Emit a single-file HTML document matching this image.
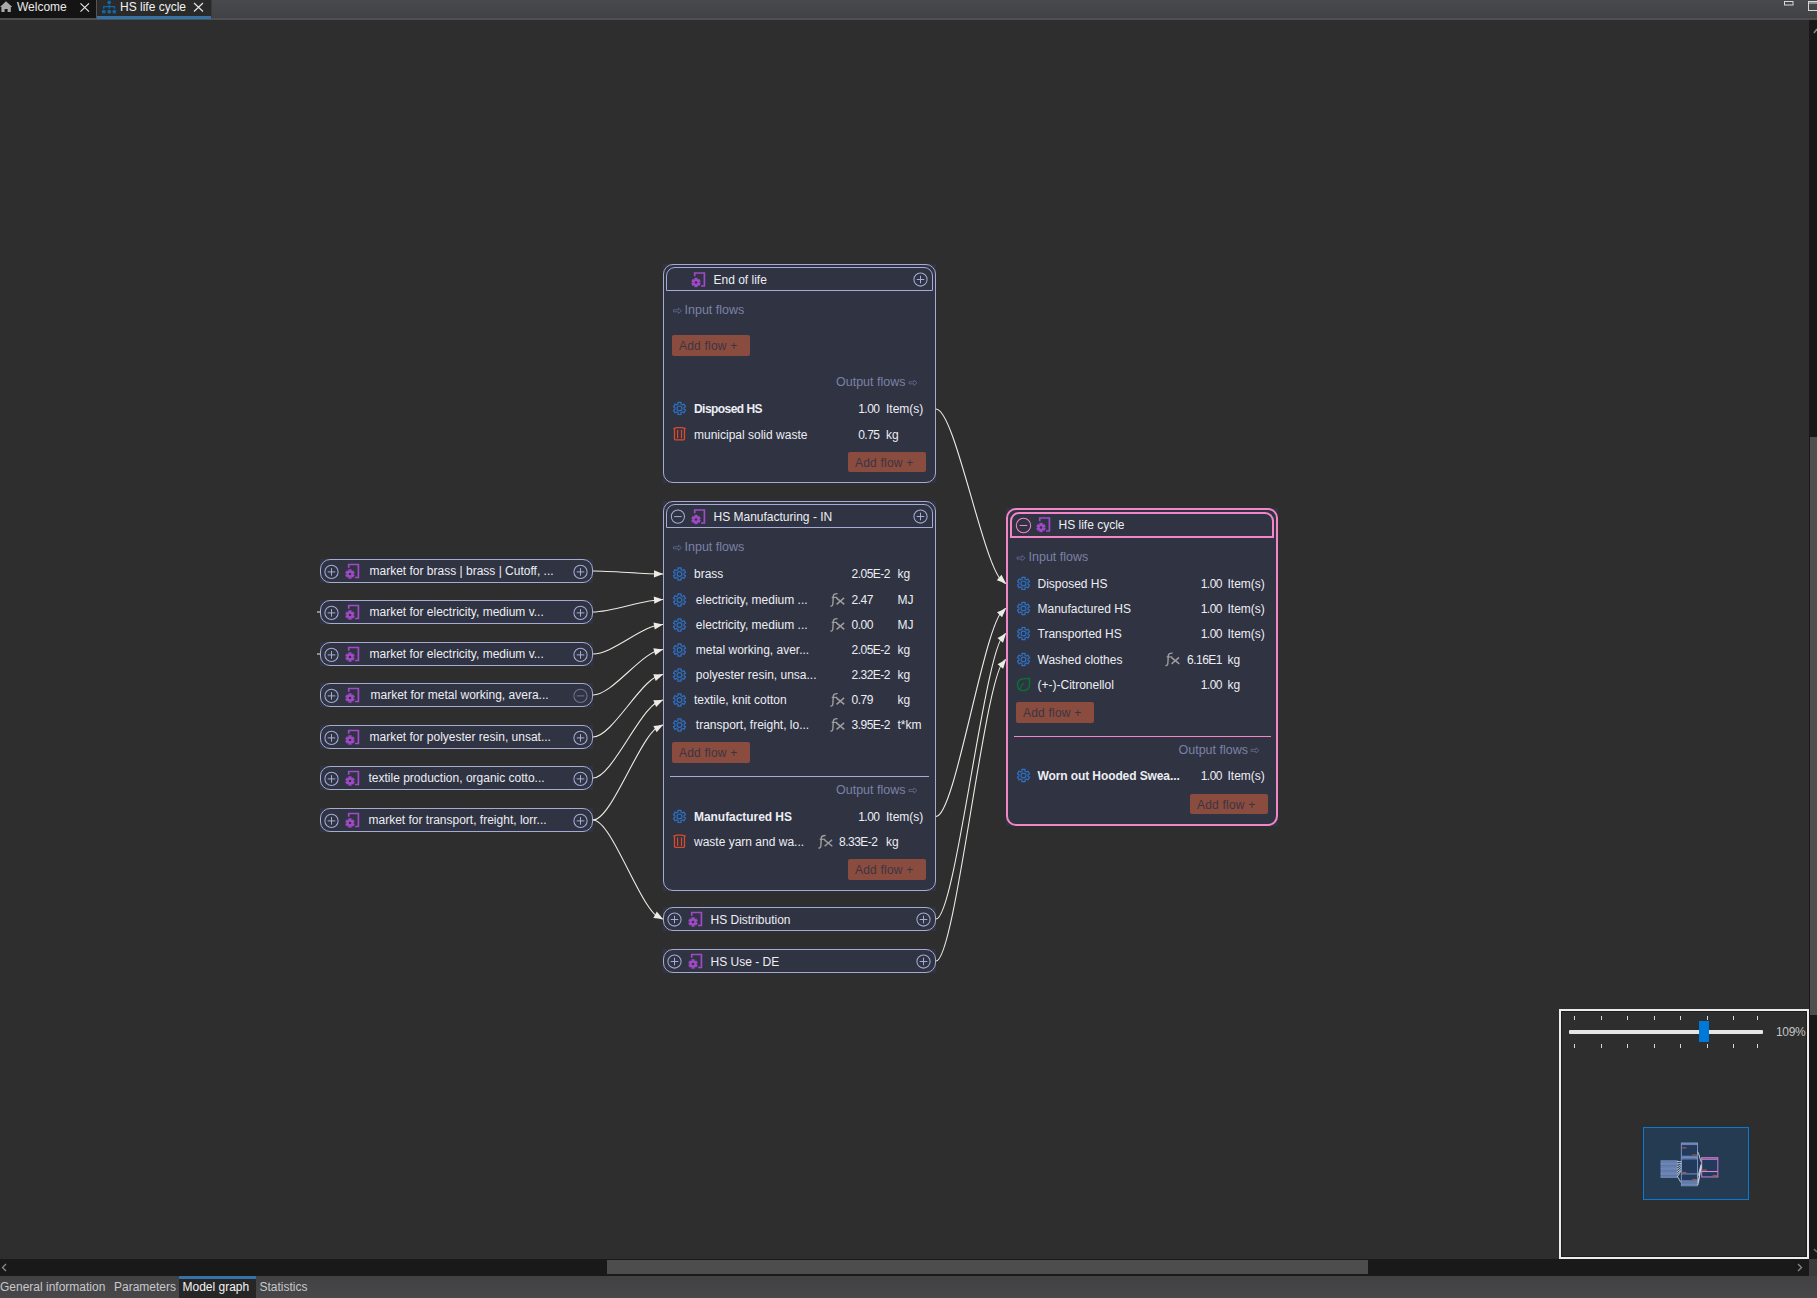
<!DOCTYPE html>
<html><head><meta charset="utf-8"><style>
html,body{margin:0;padding:0;}
body{width:1817px;height:1298px;position:relative;overflow:hidden;background:#2e2e2e;font-family:"Liberation Sans",sans-serif;}
.t{position:absolute;white-space:nowrap;line-height:14px;font-size:12px;}
.nbg{position:absolute;background:#303342;}
.nb{position:absolute;box-sizing:border-box;}
.btn{position:absolute;background:#8b4c40;border-radius:2px;}
.sep{position:absolute;height:1px;}
svg{position:absolute;left:0;top:0;}
</style></head><body>
<div style="position:absolute;left:0;top:0;width:1817px;height:18px;background:linear-gradient(#48494c,#414245)"></div><div style="position:absolute;left:0;top:18px;width:1817px;height:2px;background:#4e4f53"></div><div style="position:absolute;left:0;top:0;width:96px;height:18px;background:#141414"></div><div style="position:absolute;left:96px;top:0;width:1px;height:18px;background:#555"></div><div style="position:absolute;left:97px;top:0;width:114px;height:16px;background:#2a2a2a"></div><div style="position:absolute;left:97px;top:16px;width:114px;height:3px;background:#3472a8"></div><div style="position:absolute;left:211px;top:0;width:1px;height:18px;background:#3a3a3d"></div><div class="t" style="left:17px;top:0px;font-size:12px;color:#e8e8e8;line-height:14px">Welcome</div><div class="t" style="left:120px;top:0px;font-size:12px;color:#f2f2f2;line-height:14px">HS life cycle</div><div style="position:absolute;left:1809px;top:20px;width:8px;height:1239px;background:#191919"></div><div style="position:absolute;left:1810px;top:437px;width:7px;height:578px;background:#4f4f4f"></div><div style="position:absolute;left:0;top:1259px;width:1809px;height:17px;background:#191919"></div><div style="position:absolute;left:607px;top:1260px;width:761px;height:14px;background:#4d4d4d"></div><div style="position:absolute;left:1809px;top:1259px;width:8px;height:17px;background:#3b3b3b"></div><div style="position:absolute;left:0;top:1276px;width:1817px;height:22px;background:linear-gradient(#414144,#48484b)"></div><div style="position:absolute;left:179px;top:1276px;width:77px;height:22px;background:#262626"></div><div style="position:absolute;left:179px;top:1276px;width:77px;height:3px;background:#3472a8"></div><div class="t" style="left:0px;top:1280px;font-size:12px;color:#c8c8c8;line-height:14px">General information</div><div class="t" style="left:114px;top:1280px;font-size:12px;color:#c8c8c8;line-height:14px">Parameters</div><div class="t" style="left:182.5px;top:1280px;font-size:12px;color:#f4f4f4;line-height:14px">Model graph</div><div class="t" style="left:259.5px;top:1280px;font-size:12px;color:#c8c8c8;line-height:14px">Statistics</div><div style="position:absolute;left:1559px;top:1009px;width:250px;height:250px;box-sizing:border-box;border:2px solid #ececec;background:#2e2e2e"></div><div style="position:absolute;left:1561px;top:1011px;width:246px;height:246px;box-sizing:border-box;border:1px solid #1e1e1e"></div><div style="position:absolute;left:1569px;top:1030px;width:194px;height:4px;background:#e6e6e6;border-radius:1px"></div><div style="position:absolute;left:1699px;top:1021px;width:10px;height:21px;background:#0078d7"></div><div class="t" style="left:1776px;top:1025px;font-size:12px;color:#c4c4c4;line-height:14px;letter-spacing:-0.3px">109%</div><div style="position:absolute;left:1643px;top:1127px;width:106px;height:73px;box-sizing:border-box;border:1px solid #0a78d4;background:#243b52"></div>
<div class="nbg" style="left:663px;top:264px;width:273px;height:219px"></div><div class="nb" style="left:663px;top:264px;width:273px;height:219px;border:1px solid #a5abd5;border-radius:10px"></div><div class="nb" style="left:666px;top:267px;width:267px;height:24px;border:1px solid #a5abd5;border-radius:9px 9px 0 0"></div><div class="btn" style="left:672px;top:335px;width:78px;height:21px"></div><div class="btn" style="left:848px;top:452px;width:78px;height:20px"></div><div class="nbg" style="left:663px;top:501px;width:273px;height:390px"></div><div class="nb" style="left:663px;top:501px;width:273px;height:390px;border:1px solid #a5abd5;border-radius:10px"></div><div class="nb" style="left:666px;top:504px;width:267px;height:24px;border:1px solid #a5abd5;border-radius:9px 9px 0 0"></div><div class="btn" style="left:672px;top:742px;width:78px;height:21px"></div><div class="sep" style="left:670px;top:776px;width:259px;background:#a5abd5"></div><div class="btn" style="left:848px;top:859px;width:78px;height:21px"></div><div class="nbg" style="left:663px;top:907px;width:273px;height:24px"></div><div class="nb" style="left:663px;top:907px;width:273px;height:24px;border:1px solid #a5abd5;border-radius:10px"></div><div class="nbg" style="left:663px;top:949px;width:273px;height:24px"></div><div class="nb" style="left:663px;top:949px;width:273px;height:24px;border:1px solid #a5abd5;border-radius:10px"></div><div class="nbg" style="left:1006px;top:508px;width:272px;height:318px"></div><div class="nb" style="left:1006px;top:508px;width:272px;height:318px;border:2px solid #f386c8;border-radius:10px"></div><div class="nb" style="left:1010px;top:512px;width:264px;height:26px;border:2px solid #f386c8;border-radius:9px 9px 0 0"></div><div class="btn" style="left:1016px;top:702px;width:78px;height:21px"></div><div class="sep" style="left:1014px;top:735.5px;width:257px;height:1.5px;background:#f386c8"></div><div class="btn" style="left:1190px;top:794px;width:78px;height:20px"></div><div class="nbg" style="left:320px;top:559px;width:273px;height:24px"></div><div class="nb" style="left:320px;top:559px;width:273px;height:24px;border:1px solid #a5abd5;border-radius:10px"></div><div class="nbg" style="left:320px;top:600px;width:273px;height:24px"></div><div class="nb" style="left:320px;top:600px;width:273px;height:24px;border:1px solid #a5abd5;border-radius:10px"></div><div class="nbg" style="left:320px;top:642px;width:273px;height:24px"></div><div class="nb" style="left:320px;top:642px;width:273px;height:24px;border:1px solid #a5abd5;border-radius:10px"></div><div class="nbg" style="left:320px;top:683px;width:273px;height:24px"></div><div class="nb" style="left:320px;top:683px;width:273px;height:24px;border:1px solid #a5abd5;border-radius:10px"></div><div class="nbg" style="left:320px;top:725px;width:273px;height:24px"></div><div class="nb" style="left:320px;top:725px;width:273px;height:24px;border:1px solid #a5abd5;border-radius:10px"></div><div class="nbg" style="left:320px;top:766px;width:273px;height:24px"></div><div class="nb" style="left:320px;top:766px;width:273px;height:24px;border:1px solid #a5abd5;border-radius:10px"></div><div class="nbg" style="left:320px;top:808px;width:273px;height:24px"></div><div class="nb" style="left:320px;top:808px;width:273px;height:24px;border:1px solid #a5abd5;border-radius:10px"></div>
<svg width="1817" height="1298" viewBox="0 0 1817 1298"><path d="M694.7 276.2 V273 H704.4 V286 H701" fill="none" stroke="#a04ac8" stroke-width="1.7"/><path d="M697.53 278.06 L694.47 278.06 L694.78 279.33 L693.86 279.86 L692.92 278.95 L691.39 281.60 L692.64 281.97 L692.64 283.03 L691.39 283.40 L692.92 286.05 L693.86 285.14 L694.78 285.67 L694.47 286.94 L697.53 286.94 L697.22 285.67 L698.14 285.14 L699.08 286.05 L700.61 283.40 L699.36 283.03 L699.36 281.97 L700.61 281.60 L699.08 278.95 L698.14 279.86 L697.22 279.33Z" fill="#a04ac8" stroke="#a04ac8" stroke-width="0.4"/><circle cx="696.0" cy="282.5" r="1.3" fill="#303342"/><circle cx="920.5" cy="279.5" r="6.6" fill="none" stroke="#a5abd5" stroke-width="1.05"/><line x1="916.7" y1="279.5" x2="924.3" y2="279.5" stroke="#a5abd5" stroke-width="1"/><line x1="920.5" y1="275.7" x2="920.5" y2="283.3" stroke="#a5abd5" stroke-width="1"/><path d="M673.5 309.8 H678.5 V308.2 L681.5 310.8 L678.5 313.40000000000003 V311.8 H673.5 Z" fill="none" stroke="#646d96" stroke-width="0.75"/><path d="M909 381.8 H914 V380.2 L917 382.8 L914 385.40000000000003 V383.8 H909 Z" fill="none" stroke="#646d96" stroke-width="0.75"/><path d="M681.13 402.31 L677.87 402.31 L678.16 404.00 L676.36 405.04 L675.05 403.95 L673.41 406.77 L675.02 407.37 L675.02 409.43 L673.41 410.03 L675.05 412.85 L676.36 411.76 L678.16 412.80 L677.87 414.49 L681.13 414.49 L680.84 412.80 L682.64 411.76 L683.95 412.85 L685.59 410.03 L683.98 409.43 L683.98 407.37 L685.59 406.77 L683.95 403.95 L682.64 405.04 L680.84 404.00Z" fill="none" stroke="#2f71c2" stroke-width="1.15" stroke-linejoin="round"/><circle cx="679.5" cy="408.4" r="2.4" fill="none" stroke="#2f71c2" stroke-width="1.15"/><path d="M674.5 428.5 V439.1 Q674.5 439.90000000000003 675.3 439.90000000000003 H683.7 Q684.5 439.90000000000003 684.5 439.1 V428.5" fill="none" stroke="#dc4a2a" stroke-width="1.3"/><path d="M673.3 428.7 L677.0 427.7 H682.0 L685.7 428.7" fill="none" stroke="#dc4a2a" stroke-width="1.3"/><line x1="677.6" y1="430.3" x2="677.6" y2="437.8" stroke="#dc4a2a" stroke-width="1.2" stroke-linecap="round"/><line x1="681.5" y1="430.3" x2="681.5" y2="437.8" stroke="#dc4a2a" stroke-width="1.2" stroke-linecap="round"/><circle cx="677.9" cy="516.6" r="6.6" fill="none" stroke="#a5abd5" stroke-width="1.05"/><line x1="674.1" y1="516.6" x2="681.6999999999999" y2="516.6" stroke="#a5abd5" stroke-width="1"/><path d="M694.7 513.2 V510 H704.4 V523 H701" fill="none" stroke="#a04ac8" stroke-width="1.7"/><path d="M697.53 515.06 L694.47 515.06 L694.78 516.33 L693.86 516.86 L692.92 515.95 L691.39 518.60 L692.64 518.97 L692.64 520.03 L691.39 520.40 L692.92 523.05 L693.86 522.14 L694.78 522.67 L694.47 523.94 L697.53 523.94 L697.22 522.67 L698.14 522.14 L699.08 523.05 L700.61 520.40 L699.36 520.03 L699.36 518.97 L700.61 518.60 L699.08 515.95 L698.14 516.86 L697.22 516.33Z" fill="#a04ac8" stroke="#a04ac8" stroke-width="0.4"/><circle cx="696.0" cy="519.5" r="1.3" fill="#303342"/><circle cx="920.5" cy="516.5" r="6.6" fill="none" stroke="#a5abd5" stroke-width="1.05"/><line x1="916.7" y1="516.5" x2="924.3" y2="516.5" stroke="#a5abd5" stroke-width="1"/><line x1="920.5" y1="512.7" x2="920.5" y2="520.3" stroke="#a5abd5" stroke-width="1"/><path d="M673.5 546.8 H678.5 V545.1999999999999 L681.5 547.8 L678.5 550.4 V548.8 H673.5 Z" fill="none" stroke="#646d96" stroke-width="0.75"/><path d="M681.13 567.91 L677.87 567.91 L678.16 569.60 L676.36 570.64 L675.05 569.55 L673.41 572.37 L675.02 572.97 L675.02 575.03 L673.41 575.63 L675.05 578.45 L676.36 577.36 L678.16 578.40 L677.87 580.09 L681.13 580.09 L680.84 578.40 L682.64 577.36 L683.95 578.45 L685.59 575.63 L683.98 575.03 L683.98 572.97 L685.59 572.37 L683.95 569.55 L682.64 570.64 L680.84 569.60Z" fill="none" stroke="#2f71c2" stroke-width="1.15" stroke-linejoin="round"/><circle cx="679.5" cy="574" r="2.4" fill="none" stroke="#2f71c2" stroke-width="1.15"/><path d="M681.13 593.91 L677.87 593.91 L678.16 595.60 L676.36 596.64 L675.05 595.55 L673.41 598.37 L675.02 598.97 L675.02 601.03 L673.41 601.63 L675.05 604.45 L676.36 603.36 L678.16 604.40 L677.87 606.09 L681.13 606.09 L680.84 604.40 L682.64 603.36 L683.95 604.45 L685.59 601.63 L683.98 601.03 L683.98 598.97 L685.59 598.37 L683.95 595.55 L682.64 596.64 L680.84 595.60Z" fill="none" stroke="#2f71c2" stroke-width="1.15" stroke-linejoin="round"/><circle cx="679.5" cy="600" r="2.4" fill="none" stroke="#2f71c2" stroke-width="1.15"/><path d="M830.5 605.9 Q832.7 606.6999999999999 832.9 603.3 L833.3 596.0 Q833.6 593.4 837.6 593.5999999999999" fill="none" stroke="#9e9e9e" stroke-width="1.4"/><path d="M831.7 597.4 H837.2" stroke="#9e9e9e" stroke-width="1.2"/><path d="M836.3 597.9 L844.3 604.4 M844.1 597.9 L836.6 604.4" stroke="#9e9e9e" stroke-width="1.45"/><path d="M681.13 618.91 L677.87 618.91 L678.16 620.60 L676.36 621.64 L675.05 620.55 L673.41 623.37 L675.02 623.97 L675.02 626.03 L673.41 626.63 L675.05 629.45 L676.36 628.36 L678.16 629.40 L677.87 631.09 L681.13 631.09 L680.84 629.40 L682.64 628.36 L683.95 629.45 L685.59 626.63 L683.98 626.03 L683.98 623.97 L685.59 623.37 L683.95 620.55 L682.64 621.64 L680.84 620.60Z" fill="none" stroke="#2f71c2" stroke-width="1.15" stroke-linejoin="round"/><circle cx="679.5" cy="625" r="2.4" fill="none" stroke="#2f71c2" stroke-width="1.15"/><path d="M830.5 630.9 Q832.7 631.6999999999999 832.9 628.3 L833.3 621.0 Q833.6 618.4 837.6 618.5999999999999" fill="none" stroke="#9e9e9e" stroke-width="1.4"/><path d="M831.7 622.4 H837.2" stroke="#9e9e9e" stroke-width="1.2"/><path d="M836.3 622.9 L844.3 629.4 M844.1 622.9 L836.6 629.4" stroke="#9e9e9e" stroke-width="1.45"/><path d="M681.13 643.91 L677.87 643.91 L678.16 645.60 L676.36 646.64 L675.05 645.55 L673.41 648.37 L675.02 648.97 L675.02 651.03 L673.41 651.63 L675.05 654.45 L676.36 653.36 L678.16 654.40 L677.87 656.09 L681.13 656.09 L680.84 654.40 L682.64 653.36 L683.95 654.45 L685.59 651.63 L683.98 651.03 L683.98 648.97 L685.59 648.37 L683.95 645.55 L682.64 646.64 L680.84 645.60Z" fill="none" stroke="#2f71c2" stroke-width="1.15" stroke-linejoin="round"/><circle cx="679.5" cy="650" r="2.4" fill="none" stroke="#2f71c2" stroke-width="1.15"/><path d="M681.13 668.91 L677.87 668.91 L678.16 670.60 L676.36 671.64 L675.05 670.55 L673.41 673.37 L675.02 673.97 L675.02 676.03 L673.41 676.63 L675.05 679.45 L676.36 678.36 L678.16 679.40 L677.87 681.09 L681.13 681.09 L680.84 679.40 L682.64 678.36 L683.95 679.45 L685.59 676.63 L683.98 676.03 L683.98 673.97 L685.59 673.37 L683.95 670.55 L682.64 671.64 L680.84 670.60Z" fill="none" stroke="#2f71c2" stroke-width="1.15" stroke-linejoin="round"/><circle cx="679.5" cy="675" r="2.4" fill="none" stroke="#2f71c2" stroke-width="1.15"/><path d="M681.13 693.91 L677.87 693.91 L678.16 695.60 L676.36 696.64 L675.05 695.55 L673.41 698.37 L675.02 698.97 L675.02 701.03 L673.41 701.63 L675.05 704.45 L676.36 703.36 L678.16 704.40 L677.87 706.09 L681.13 706.09 L680.84 704.40 L682.64 703.36 L683.95 704.45 L685.59 701.63 L683.98 701.03 L683.98 698.97 L685.59 698.37 L683.95 695.55 L682.64 696.64 L680.84 695.60Z" fill="none" stroke="#2f71c2" stroke-width="1.15" stroke-linejoin="round"/><circle cx="679.5" cy="700" r="2.4" fill="none" stroke="#2f71c2" stroke-width="1.15"/><path d="M830.5 705.9 Q832.7 706.6999999999999 832.9 703.3 L833.3 696.0 Q833.6 693.4 837.6 693.5999999999999" fill="none" stroke="#9e9e9e" stroke-width="1.4"/><path d="M831.7 697.4 H837.2" stroke="#9e9e9e" stroke-width="1.2"/><path d="M836.3 697.9 L844.3 704.4 M844.1 697.9 L836.6 704.4" stroke="#9e9e9e" stroke-width="1.45"/><path d="M681.13 718.91 L677.87 718.91 L678.16 720.60 L676.36 721.64 L675.05 720.55 L673.41 723.37 L675.02 723.97 L675.02 726.03 L673.41 726.63 L675.05 729.45 L676.36 728.36 L678.16 729.40 L677.87 731.09 L681.13 731.09 L680.84 729.40 L682.64 728.36 L683.95 729.45 L685.59 726.63 L683.98 726.03 L683.98 723.97 L685.59 723.37 L683.95 720.55 L682.64 721.64 L680.84 720.60Z" fill="none" stroke="#2f71c2" stroke-width="1.15" stroke-linejoin="round"/><circle cx="679.5" cy="725" r="2.4" fill="none" stroke="#2f71c2" stroke-width="1.15"/><path d="M830.5 730.9 Q832.7 731.6999999999999 832.9 728.3 L833.3 721.0 Q833.6 718.4 837.6 718.5999999999999" fill="none" stroke="#9e9e9e" stroke-width="1.4"/><path d="M831.7 722.4 H837.2" stroke="#9e9e9e" stroke-width="1.2"/><path d="M836.3 722.9 L844.3 729.4 M844.1 722.9 L836.6 729.4" stroke="#9e9e9e" stroke-width="1.45"/><path d="M909 789.5 H914 V787.9 L917 790.5 L914 793.1 V791.5 H909 Z" fill="none" stroke="#646d96" stroke-width="0.75"/><path d="M681.13 810.31 L677.87 810.31 L678.16 812.00 L676.36 813.04 L675.05 811.95 L673.41 814.77 L675.02 815.37 L675.02 817.43 L673.41 818.03 L675.05 820.85 L676.36 819.76 L678.16 820.80 L677.87 822.49 L681.13 822.49 L680.84 820.80 L682.64 819.76 L683.95 820.85 L685.59 818.03 L683.98 817.43 L683.98 815.37 L685.59 814.77 L683.95 811.95 L682.64 813.04 L680.84 812.00Z" fill="none" stroke="#2f71c2" stroke-width="1.15" stroke-linejoin="round"/><circle cx="679.5" cy="816.4" r="2.4" fill="none" stroke="#2f71c2" stroke-width="1.15"/><path d="M674.5 836.0 V846.5999999999999 Q674.5 847.4 675.3 847.4 H683.7 Q684.5 847.4 684.5 846.5999999999999 V836.0" fill="none" stroke="#dc4a2a" stroke-width="1.3"/><path d="M673.3 836.1999999999999 L677.0 835.1999999999999 H682.0 L685.7 836.1999999999999" fill="none" stroke="#dc4a2a" stroke-width="1.3"/><line x1="677.6" y1="837.8" x2="677.6" y2="845.3" stroke="#dc4a2a" stroke-width="1.2" stroke-linecap="round"/><line x1="681.5" y1="837.8" x2="681.5" y2="845.3" stroke="#dc4a2a" stroke-width="1.2" stroke-linecap="round"/><path d="M818.5 847.8000000000001 Q820.7 848.6 820.9 845.2 L821.3 837.9000000000001 Q821.6 835.3000000000001 825.6 835.5" fill="none" stroke="#9e9e9e" stroke-width="1.4"/><path d="M819.7 839.3000000000001 H825.2" stroke="#9e9e9e" stroke-width="1.2"/><path d="M824.3 839.8000000000001 L832.3 846.3000000000001 M832.1 839.8000000000001 L824.6 846.3000000000001" stroke="#9e9e9e" stroke-width="1.45"/><circle cx="674.5" cy="919.5" r="6.6" fill="none" stroke="#a5abd5" stroke-width="1.05"/><line x1="670.7" y1="919.5" x2="678.3" y2="919.5" stroke="#a5abd5" stroke-width="1"/><line x1="674.5" y1="915.7" x2="674.5" y2="923.3" stroke="#a5abd5" stroke-width="1"/><path d="M691.7 915.7 V912.5 H701.4 V925.5 H698" fill="none" stroke="#a04ac8" stroke-width="1.7"/><path d="M694.53 917.56 L691.47 917.56 L691.78 918.83 L690.86 919.36 L689.92 918.45 L688.39 921.10 L689.64 921.47 L689.64 922.53 L688.39 922.90 L689.92 925.55 L690.86 924.64 L691.78 925.17 L691.47 926.44 L694.53 926.44 L694.22 925.17 L695.14 924.64 L696.08 925.55 L697.61 922.90 L696.36 922.53 L696.36 921.47 L697.61 921.10 L696.08 918.45 L695.14 919.36 L694.22 918.83Z" fill="#a04ac8" stroke="#a04ac8" stroke-width="0.4"/><circle cx="693.0" cy="922.0" r="1.3" fill="#303342"/><circle cx="923.5" cy="919.5" r="6.6" fill="none" stroke="#a5abd5" stroke-width="1.05"/><line x1="919.7" y1="919.5" x2="927.3" y2="919.5" stroke="#a5abd5" stroke-width="1"/><line x1="923.5" y1="915.7" x2="923.5" y2="923.3" stroke="#a5abd5" stroke-width="1"/><circle cx="674.5" cy="961.5" r="6.6" fill="none" stroke="#a5abd5" stroke-width="1.05"/><line x1="670.7" y1="961.5" x2="678.3" y2="961.5" stroke="#a5abd5" stroke-width="1"/><line x1="674.5" y1="957.7" x2="674.5" y2="965.3" stroke="#a5abd5" stroke-width="1"/><path d="M691.7 957.7 V954.5 H701.4 V967.5 H698" fill="none" stroke="#a04ac8" stroke-width="1.7"/><path d="M694.53 959.56 L691.47 959.56 L691.78 960.83 L690.86 961.36 L689.92 960.45 L688.39 963.10 L689.64 963.47 L689.64 964.53 L688.39 964.90 L689.92 967.55 L690.86 966.64 L691.78 967.17 L691.47 968.44 L694.53 968.44 L694.22 967.17 L695.14 966.64 L696.08 967.55 L697.61 964.90 L696.36 964.53 L696.36 963.47 L697.61 963.10 L696.08 960.45 L695.14 961.36 L694.22 960.83Z" fill="#a04ac8" stroke="#a04ac8" stroke-width="0.4"/><circle cx="693.0" cy="964.0" r="1.3" fill="#303342"/><circle cx="923.5" cy="961.5" r="6.6" fill="none" stroke="#a5abd5" stroke-width="1.05"/><line x1="919.7" y1="961.5" x2="927.3" y2="961.5" stroke="#a5abd5" stroke-width="1"/><line x1="923.5" y1="957.7" x2="923.5" y2="965.3" stroke="#a5abd5" stroke-width="1"/><circle cx="1023.5" cy="525.5" r="7.2" fill="none" stroke="#f386c8" stroke-width="1.05"/><line x1="1019.7" y1="525.5" x2="1027.3" y2="525.5" stroke="#f386c8" stroke-width="1"/><path d="M1039.7 521.2 V518 H1049.4 V531 H1046" fill="none" stroke="#a04ac8" stroke-width="1.7"/><path d="M1042.53 523.06 L1039.47 523.06 L1039.78 524.33 L1038.86 524.86 L1037.92 523.95 L1036.39 526.60 L1037.64 526.97 L1037.64 528.03 L1036.39 528.40 L1037.92 531.05 L1038.86 530.14 L1039.78 530.67 L1039.47 531.94 L1042.53 531.94 L1042.22 530.67 L1043.14 530.14 L1044.08 531.05 L1045.61 528.40 L1044.36 528.03 L1044.36 526.97 L1045.61 526.60 L1044.08 523.95 L1043.14 524.86 L1042.22 524.33Z" fill="#a04ac8" stroke="#a04ac8" stroke-width="0.4"/><circle cx="1041.0" cy="527.5" r="1.3" fill="#303342"/><path d="M1017 557.0999999999999 H1022 V555.4999999999999 L1025 558.0999999999999 L1022 560.6999999999999 V559.0999999999999 H1017 Z" fill="none" stroke="#646d96" stroke-width="0.75"/><path d="M1025.13 577.31 L1021.87 577.31 L1022.16 579.00 L1020.36 580.04 L1019.05 578.95 L1017.41 581.77 L1019.02 582.37 L1019.02 584.43 L1017.41 585.03 L1019.05 587.85 L1020.36 586.76 L1022.16 587.80 L1021.87 589.49 L1025.13 589.49 L1024.84 587.80 L1026.64 586.76 L1027.95 587.85 L1029.59 585.03 L1027.98 584.43 L1027.98 582.37 L1029.59 581.77 L1027.95 578.95 L1026.64 580.04 L1024.84 579.00Z" fill="none" stroke="#2f71c2" stroke-width="1.15" stroke-linejoin="round"/><circle cx="1023.5" cy="583.4" r="2.4" fill="none" stroke="#2f71c2" stroke-width="1.15"/><path d="M1025.13 602.41 L1021.87 602.41 L1022.16 604.10 L1020.36 605.14 L1019.05 604.05 L1017.41 606.87 L1019.02 607.47 L1019.02 609.53 L1017.41 610.13 L1019.05 612.95 L1020.36 611.86 L1022.16 612.90 L1021.87 614.59 L1025.13 614.59 L1024.84 612.90 L1026.64 611.86 L1027.95 612.95 L1029.59 610.13 L1027.98 609.53 L1027.98 607.47 L1029.59 606.87 L1027.95 604.05 L1026.64 605.14 L1024.84 604.10Z" fill="none" stroke="#2f71c2" stroke-width="1.15" stroke-linejoin="round"/><circle cx="1023.5" cy="608.5" r="2.4" fill="none" stroke="#2f71c2" stroke-width="1.15"/><path d="M1025.13 627.51 L1021.87 627.51 L1022.16 629.20 L1020.36 630.24 L1019.05 629.15 L1017.41 631.97 L1019.02 632.57 L1019.02 634.63 L1017.41 635.23 L1019.05 638.05 L1020.36 636.96 L1022.16 638.00 L1021.87 639.69 L1025.13 639.69 L1024.84 638.00 L1026.64 636.96 L1027.95 638.05 L1029.59 635.23 L1027.98 634.63 L1027.98 632.57 L1029.59 631.97 L1027.95 629.15 L1026.64 630.24 L1024.84 629.20Z" fill="none" stroke="#2f71c2" stroke-width="1.15" stroke-linejoin="round"/><circle cx="1023.5" cy="633.6" r="2.4" fill="none" stroke="#2f71c2" stroke-width="1.15"/><path d="M1025.13 653.41 L1021.87 653.41 L1022.16 655.10 L1020.36 656.14 L1019.05 655.05 L1017.41 657.87 L1019.02 658.47 L1019.02 660.53 L1017.41 661.13 L1019.05 663.95 L1020.36 662.86 L1022.16 663.90 L1021.87 665.59 L1025.13 665.59 L1024.84 663.90 L1026.64 662.86 L1027.95 663.95 L1029.59 661.13 L1027.98 660.53 L1027.98 658.47 L1029.59 657.87 L1027.95 655.05 L1026.64 656.14 L1024.84 655.10Z" fill="none" stroke="#2f71c2" stroke-width="1.15" stroke-linejoin="round"/><circle cx="1023.5" cy="659.5" r="2.4" fill="none" stroke="#2f71c2" stroke-width="1.15"/><path d="M1165.5 665.4 Q1167.7 666.1999999999999 1167.9 662.8 L1168.3 655.5 Q1168.6 652.9 1172.6 653.0999999999999" fill="none" stroke="#9e9e9e" stroke-width="1.4"/><path d="M1166.7 656.9 H1172.2" stroke="#9e9e9e" stroke-width="1.2"/><path d="M1171.3 657.4 L1179.3 663.9 M1179.1 657.4 L1171.6 663.9" stroke="#9e9e9e" stroke-width="1.45"/><path d="M1029.5 678.3000000000001 V685.1 C1029.5 688.6 1026.5 690.6 1023.0 690.6 C1019.5 690.6 1017.5 688.1 1017.5 684.6 C1017.5 680.6 1020.5 678.8000000000001 1024.5 678.6 Z" fill="none" stroke="#067532" stroke-width="1.35" stroke-linejoin="round"/><path d="M1020.2 689.4 C1020.5 686.6 1022.0 684.6 1024.1 683.0" fill="none" stroke="#067532" stroke-width="1.1" opacity="0.8"/><path d="M1251 749.4 H1256 V747.8 L1259 750.4 L1256 753.0 V751.4 H1251 Z" fill="none" stroke="#646d96" stroke-width="0.75"/><path d="M1025.13 769.41 L1021.87 769.41 L1022.16 771.10 L1020.36 772.14 L1019.05 771.05 L1017.41 773.87 L1019.02 774.47 L1019.02 776.53 L1017.41 777.13 L1019.05 779.95 L1020.36 778.86 L1022.16 779.90 L1021.87 781.59 L1025.13 781.59 L1024.84 779.90 L1026.64 778.86 L1027.95 779.95 L1029.59 777.13 L1027.98 776.53 L1027.98 774.47 L1029.59 773.87 L1027.95 771.05 L1026.64 772.14 L1024.84 771.10Z" fill="none" stroke="#2f71c2" stroke-width="1.15" stroke-linejoin="round"/><circle cx="1023.5" cy="775.5" r="2.4" fill="none" stroke="#2f71c2" stroke-width="1.15"/><circle cx="331.5" cy="571.9" r="6.6" fill="none" stroke="#a5abd5" stroke-width="1.05"/><line x1="327.7" y1="571.9" x2="335.3" y2="571.9" stroke="#a5abd5" stroke-width="1"/><line x1="331.5" y1="568.1" x2="331.5" y2="575.6999999999999" stroke="#a5abd5" stroke-width="1"/><path d="M348.7 567.7 V564.5 H358.4 V577.5 H355" fill="none" stroke="#a04ac8" stroke-width="1.7"/><path d="M351.53 569.56 L348.47 569.56 L348.78 570.83 L347.86 571.36 L346.92 570.45 L345.39 573.10 L346.64 573.47 L346.64 574.53 L345.39 574.90 L346.92 577.55 L347.86 576.64 L348.78 577.17 L348.47 578.44 L351.53 578.44 L351.22 577.17 L352.14 576.64 L353.08 577.55 L354.61 574.90 L353.36 574.53 L353.36 573.47 L354.61 573.10 L353.08 570.45 L352.14 571.36 L351.22 570.83Z" fill="#a04ac8" stroke="#a04ac8" stroke-width="0.4"/><circle cx="350.0" cy="574.0" r="1.3" fill="#303342"/><circle cx="580.5" cy="571.9" r="6.6" fill="none" stroke="#a5abd5" stroke-width="1.05"/><line x1="576.7" y1="571.9" x2="584.3" y2="571.9" stroke="#a5abd5" stroke-width="1"/><line x1="580.5" y1="568.1" x2="580.5" y2="575.6999999999999" stroke="#a5abd5" stroke-width="1"/><circle cx="331.5" cy="612.9" r="6.6" fill="none" stroke="#a5abd5" stroke-width="1.05"/><line x1="327.7" y1="612.9" x2="335.3" y2="612.9" stroke="#a5abd5" stroke-width="1"/><line x1="331.5" y1="609.1" x2="331.5" y2="616.6999999999999" stroke="#a5abd5" stroke-width="1"/><path d="M348.7 608.7 V605.5 H358.4 V618.5 H355" fill="none" stroke="#a04ac8" stroke-width="1.7"/><path d="M351.53 610.56 L348.47 610.56 L348.78 611.83 L347.86 612.36 L346.92 611.45 L345.39 614.10 L346.64 614.47 L346.64 615.53 L345.39 615.90 L346.92 618.55 L347.86 617.64 L348.78 618.17 L348.47 619.44 L351.53 619.44 L351.22 618.17 L352.14 617.64 L353.08 618.55 L354.61 615.90 L353.36 615.53 L353.36 614.47 L354.61 614.10 L353.08 611.45 L352.14 612.36 L351.22 611.83Z" fill="#a04ac8" stroke="#a04ac8" stroke-width="0.4"/><circle cx="350.0" cy="615.0" r="1.3" fill="#303342"/><circle cx="580.5" cy="612.9" r="6.6" fill="none" stroke="#a5abd5" stroke-width="1.05"/><line x1="576.7" y1="612.9" x2="584.3" y2="612.9" stroke="#a5abd5" stroke-width="1"/><line x1="580.5" y1="609.1" x2="580.5" y2="616.6999999999999" stroke="#a5abd5" stroke-width="1"/><circle cx="331.5" cy="654.9" r="6.6" fill="none" stroke="#a5abd5" stroke-width="1.05"/><line x1="327.7" y1="654.9" x2="335.3" y2="654.9" stroke="#a5abd5" stroke-width="1"/><line x1="331.5" y1="651.1" x2="331.5" y2="658.6999999999999" stroke="#a5abd5" stroke-width="1"/><path d="M348.7 650.7 V647.5 H358.4 V660.5 H355" fill="none" stroke="#a04ac8" stroke-width="1.7"/><path d="M351.53 652.56 L348.47 652.56 L348.78 653.83 L347.86 654.36 L346.92 653.45 L345.39 656.10 L346.64 656.47 L346.64 657.53 L345.39 657.90 L346.92 660.55 L347.86 659.64 L348.78 660.17 L348.47 661.44 L351.53 661.44 L351.22 660.17 L352.14 659.64 L353.08 660.55 L354.61 657.90 L353.36 657.53 L353.36 656.47 L354.61 656.10 L353.08 653.45 L352.14 654.36 L351.22 653.83Z" fill="#a04ac8" stroke="#a04ac8" stroke-width="0.4"/><circle cx="350.0" cy="657.0" r="1.3" fill="#303342"/><circle cx="580.5" cy="654.9" r="6.6" fill="none" stroke="#a5abd5" stroke-width="1.05"/><line x1="576.7" y1="654.9" x2="584.3" y2="654.9" stroke="#a5abd5" stroke-width="1"/><line x1="580.5" y1="651.1" x2="580.5" y2="658.6999999999999" stroke="#a5abd5" stroke-width="1"/><circle cx="331.5" cy="695.9" r="6.6" fill="none" stroke="#a5abd5" stroke-width="1.05"/><line x1="327.7" y1="695.9" x2="335.3" y2="695.9" stroke="#a5abd5" stroke-width="1"/><line x1="331.5" y1="692.1" x2="331.5" y2="699.6999999999999" stroke="#a5abd5" stroke-width="1"/><path d="M348.7 691.7 V688.5 H358.4 V701.5 H355" fill="none" stroke="#a04ac8" stroke-width="1.7"/><path d="M351.53 693.56 L348.47 693.56 L348.78 694.83 L347.86 695.36 L346.92 694.45 L345.39 697.10 L346.64 697.47 L346.64 698.53 L345.39 698.90 L346.92 701.55 L347.86 700.64 L348.78 701.17 L348.47 702.44 L351.53 702.44 L351.22 701.17 L352.14 700.64 L353.08 701.55 L354.61 698.90 L353.36 698.53 L353.36 697.47 L354.61 697.10 L353.08 694.45 L352.14 695.36 L351.22 694.83Z" fill="#a04ac8" stroke="#a04ac8" stroke-width="0.4"/><circle cx="350.0" cy="698.0" r="1.3" fill="#303342"/><circle cx="580.5" cy="695.9" r="6.6" fill="none" stroke="#6e7390" stroke-width="1.05"/><line x1="576.7" y1="695.9" x2="584.3" y2="695.9" stroke="#6e7390" stroke-width="1"/><circle cx="331.5" cy="737.9" r="6.6" fill="none" stroke="#a5abd5" stroke-width="1.05"/><line x1="327.7" y1="737.9" x2="335.3" y2="737.9" stroke="#a5abd5" stroke-width="1"/><line x1="331.5" y1="734.1" x2="331.5" y2="741.6999999999999" stroke="#a5abd5" stroke-width="1"/><path d="M348.7 733.7 V730.5 H358.4 V743.5 H355" fill="none" stroke="#a04ac8" stroke-width="1.7"/><path d="M351.53 735.56 L348.47 735.56 L348.78 736.83 L347.86 737.36 L346.92 736.45 L345.39 739.10 L346.64 739.47 L346.64 740.53 L345.39 740.90 L346.92 743.55 L347.86 742.64 L348.78 743.17 L348.47 744.44 L351.53 744.44 L351.22 743.17 L352.14 742.64 L353.08 743.55 L354.61 740.90 L353.36 740.53 L353.36 739.47 L354.61 739.10 L353.08 736.45 L352.14 737.36 L351.22 736.83Z" fill="#a04ac8" stroke="#a04ac8" stroke-width="0.4"/><circle cx="350.0" cy="740.0" r="1.3" fill="#303342"/><circle cx="580.5" cy="737.9" r="6.6" fill="none" stroke="#a5abd5" stroke-width="1.05"/><line x1="576.7" y1="737.9" x2="584.3" y2="737.9" stroke="#a5abd5" stroke-width="1"/><line x1="580.5" y1="734.1" x2="580.5" y2="741.6999999999999" stroke="#a5abd5" stroke-width="1"/><circle cx="331.5" cy="778.9" r="6.6" fill="none" stroke="#a5abd5" stroke-width="1.05"/><line x1="327.7" y1="778.9" x2="335.3" y2="778.9" stroke="#a5abd5" stroke-width="1"/><line x1="331.5" y1="775.1" x2="331.5" y2="782.6999999999999" stroke="#a5abd5" stroke-width="1"/><path d="M348.7 774.7 V771.5 H358.4 V784.5 H355" fill="none" stroke="#a04ac8" stroke-width="1.7"/><path d="M351.53 776.56 L348.47 776.56 L348.78 777.83 L347.86 778.36 L346.92 777.45 L345.39 780.10 L346.64 780.47 L346.64 781.53 L345.39 781.90 L346.92 784.55 L347.86 783.64 L348.78 784.17 L348.47 785.44 L351.53 785.44 L351.22 784.17 L352.14 783.64 L353.08 784.55 L354.61 781.90 L353.36 781.53 L353.36 780.47 L354.61 780.10 L353.08 777.45 L352.14 778.36 L351.22 777.83Z" fill="#a04ac8" stroke="#a04ac8" stroke-width="0.4"/><circle cx="350.0" cy="781.0" r="1.3" fill="#303342"/><circle cx="580.5" cy="778.9" r="6.6" fill="none" stroke="#a5abd5" stroke-width="1.05"/><line x1="576.7" y1="778.9" x2="584.3" y2="778.9" stroke="#a5abd5" stroke-width="1"/><line x1="580.5" y1="775.1" x2="580.5" y2="782.6999999999999" stroke="#a5abd5" stroke-width="1"/><circle cx="331.5" cy="820.9" r="6.6" fill="none" stroke="#a5abd5" stroke-width="1.05"/><line x1="327.7" y1="820.9" x2="335.3" y2="820.9" stroke="#a5abd5" stroke-width="1"/><line x1="331.5" y1="817.1" x2="331.5" y2="824.6999999999999" stroke="#a5abd5" stroke-width="1"/><path d="M348.7 816.7 V813.5 H358.4 V826.5 H355" fill="none" stroke="#a04ac8" stroke-width="1.7"/><path d="M351.53 818.56 L348.47 818.56 L348.78 819.83 L347.86 820.36 L346.92 819.45 L345.39 822.10 L346.64 822.47 L346.64 823.53 L345.39 823.90 L346.92 826.55 L347.86 825.64 L348.78 826.17 L348.47 827.44 L351.53 827.44 L351.22 826.17 L352.14 825.64 L353.08 826.55 L354.61 823.90 L353.36 823.53 L353.36 822.47 L354.61 822.10 L353.08 819.45 L352.14 820.36 L351.22 819.83Z" fill="#a04ac8" stroke="#a04ac8" stroke-width="0.4"/><circle cx="350.0" cy="823.0" r="1.3" fill="#303342"/><circle cx="580.5" cy="820.9" r="6.6" fill="none" stroke="#a5abd5" stroke-width="1.05"/><line x1="576.7" y1="820.9" x2="584.3" y2="820.9" stroke="#a5abd5" stroke-width="1"/><line x1="580.5" y1="817.1" x2="580.5" y2="824.6999999999999" stroke="#a5abd5" stroke-width="1"/><path d="M593 571 C613 571 643 574 663 574" fill="none" stroke="#ecece4" stroke-width="1.1"/><path d="M663 574 L653.94 577.44 L654.07 570.24Z" fill="#ecece4"/><path d="M593 612 C613 612 643 599.5 663 599.5" fill="none" stroke="#ecece4" stroke-width="1.1"/><path d="M663 599.5 L654.29 603.76 L653.76 596.58Z" fill="#ecece4"/><path d="M593 654 C613 654 643 624.5 663 624.5" fill="none" stroke="#ecece4" stroke-width="1.1"/><path d="M663 624.5 L654.76 629.60 L653.51 622.51Z" fill="#ecece4"/><path d="M593 695 C613 695 643 649.5 663 649.5" fill="none" stroke="#ecece4" stroke-width="1.1"/><path d="M663 649.5 L655.23 655.30 L653.38 648.34Z" fill="#ecece4"/><path d="M593 737 C613 737 643 674.5 663 674.5" fill="none" stroke="#ecece4" stroke-width="1.1"/><path d="M663 674.5 L655.75 680.93 L653.31 674.16Z" fill="#ecece4"/><path d="M593 778 C613 778 643 700 663 700" fill="none" stroke="#ecece4" stroke-width="1.1"/><path d="M663 700 L656.20 706.90 L653.31 700.31Z" fill="#ecece4"/><path d="M593 820 C613 820 643 725 663 725" fill="none" stroke="#ecece4" stroke-width="1.1"/><path d="M663 725 L656.67 732.34 L653.35 725.95Z" fill="#ecece4"/><path d="M593 820 C613 820 643 919 663 919" fill="none" stroke="#ecece4" stroke-width="1.1"/><path d="M663 919 L653.37 917.89 L656.79 911.56Z" fill="#ecece4"/><path d="M936 409 C956 409 986 583.4 1006 583.4" fill="none" stroke="#ecece4" stroke-width="1.1"/><path d="M1006 583.4 L996.80 580.34 L1001.45 574.84Z" fill="#ecece4"/><path d="M936 816.5 C956 816.5 986 608.5 1006 608.5" fill="none" stroke="#ecece4" stroke-width="1.1"/><path d="M1006 608.5 L1002.00 617.33 L997.01 612.14Z" fill="#ecece4"/><path d="M936 919 C956 919 986 633.5 1006 633.5" fill="none" stroke="#ecece4" stroke-width="1.1"/><path d="M1006 633.5 L1002.98 642.71 L997.46 638.09Z" fill="#ecece4"/><path d="M936 961 C956 961 986 659.5 1006 659.5" fill="none" stroke="#ecece4" stroke-width="1.1"/><path d="M1006 659.5 L1003.14 668.76 L997.54 664.23Z" fill="#ecece4"/><line x1="317" y1="612" x2="320" y2="612" stroke="#ecece4" stroke-width="1"/><line x1="317" y1="654" x2="320" y2="654" stroke="#ecece4" stroke-width="1"/><path d="M0 7 L6 1.2 L12.3 7 H10.8 V12 H7.6 V9 H4.6 V12 H1.4 V7 Z" fill="#a8a8a8"/><path d="M80.5 3.3 L89 11.7 M89 3.3 L80.5 11.7" stroke="#e8e8e8" stroke-width="1.1"/><path d="M194 3 L203 11.5 M203 3 L194 11.5" stroke="#e8e8e8" stroke-width="1.1"/><circle cx="109.2" cy="2.4" r="1.85" fill="#1168a8"/><path d="M103.7 8.8 V6.7 H114.5 V8.8 M109.3 5 V8.8" stroke="#1168a8" stroke-width="1.3" fill="none"/><circle cx="103.8" cy="11.7" r="1.9" fill="#1168a8"/><circle cx="109.2" cy="11.7" r="1.9" fill="#1168a8"/><circle cx="114.3" cy="11.7" r="1.9" fill="#1168a8"/><rect x="1784.5" y="1.5" width="8.5" height="3.5" fill="none" stroke="#d8d8d8" stroke-width="1"/><rect x="1808.5" y="1.5" width="9" height="9" fill="none" stroke="#d8d8d8" stroke-width="1"/><line x1="1808" y1="3" x2="1817" y2="3" stroke="#d8d8d8" stroke-width="1"/><path d="M1814 33 L1817 29" stroke="#8a8a8a" stroke-width="1.5"/><path d="M1814 1249 L1817 1252" stroke="#707070" stroke-width="1.5"/><path d="M6 1264 L2.5 1267.5 L6 1271" stroke="#8a8a8a" stroke-width="1.3" fill="none"/><path d="M1798 1264 L1801.5 1267.5 L1798 1271" stroke="#8a8a8a" stroke-width="1.3" fill="none"/><line x1="1574.5" y1="1016" x2="1574.5" y2="1020" stroke="#d8d8d8" stroke-width="1"/><line x1="1574.5" y1="1044" x2="1574.5" y2="1048" stroke="#d8d8d8" stroke-width="1"/><line x1="1601.5" y1="1016" x2="1601.5" y2="1020" stroke="#d8d8d8" stroke-width="1"/><line x1="1601.5" y1="1044" x2="1601.5" y2="1048" stroke="#d8d8d8" stroke-width="1"/><line x1="1627.5" y1="1016" x2="1627.5" y2="1020" stroke="#d8d8d8" stroke-width="1"/><line x1="1627.5" y1="1044" x2="1627.5" y2="1048" stroke="#d8d8d8" stroke-width="1"/><line x1="1654.5" y1="1016" x2="1654.5" y2="1020" stroke="#d8d8d8" stroke-width="1"/><line x1="1654.5" y1="1044" x2="1654.5" y2="1048" stroke="#d8d8d8" stroke-width="1"/><line x1="1680.5" y1="1016" x2="1680.5" y2="1020" stroke="#d8d8d8" stroke-width="1"/><line x1="1680.5" y1="1044" x2="1680.5" y2="1048" stroke="#d8d8d8" stroke-width="1"/><line x1="1707.5" y1="1016" x2="1707.5" y2="1020" stroke="#d8d8d8" stroke-width="1"/><line x1="1707.5" y1="1044" x2="1707.5" y2="1048" stroke="#d8d8d8" stroke-width="1"/><line x1="1733.5" y1="1016" x2="1733.5" y2="1020" stroke="#d8d8d8" stroke-width="1"/><line x1="1733.5" y1="1044" x2="1733.5" y2="1048" stroke="#d8d8d8" stroke-width="1"/><line x1="1757.5" y1="1016" x2="1757.5" y2="1020" stroke="#d8d8d8" stroke-width="1"/><line x1="1757.5" y1="1044" x2="1757.5" y2="1048" stroke="#d8d8d8" stroke-width="1"/><g transform="translate(1661,1143) scale(0.0593,0.0604) translate(-320,-264)"><rect x="663" y="264" width="273" height="219" rx="0" fill="#223a5c" stroke="#7d95c8" stroke-width="16"/><rect x="671" y="271" width="257" height="20" rx="0" fill="#223a5c" stroke="#7d95c8" stroke-width="14"/><rect x="672" y="335" width="78" height="21" fill="#a0583f"/><rect x="848" y="452" width="78" height="20" fill="#a0583f"/><rect x="663" y="501" width="273" height="390" rx="0" fill="#223a5c" stroke="#7d95c8" stroke-width="16"/><rect x="671" y="508" width="257" height="20" rx="0" fill="#223a5c" stroke="#7d95c8" stroke-width="14"/><rect x="672" y="742" width="78" height="21" fill="#a0583f"/><rect x="848" y="859" width="78" height="21" fill="#a0583f"/><line x1="663" y1="776" x2="936" y2="776" stroke="#7d95c8" stroke-width="16"/><rect x="663" y="907" width="273" height="24" rx="0" fill="#4f6a98" stroke="#7d95c8" stroke-width="14"/><rect x="663" y="949" width="273" height="24" rx="0" fill="#4f6a98" stroke="#7d95c8" stroke-width="14"/><rect x="1006" y="508" width="272" height="318" rx="0" fill="#223a5c" stroke="#c27ac8" stroke-width="18"/><rect x="1014" y="516" width="256" height="20" rx="0" fill="#223a5c" stroke="#c27ac8" stroke-width="14"/><rect x="1016" y="702" width="78" height="21" fill="#a0583f"/><rect x="1190" y="794" width="78" height="20" fill="#a0583f"/><line x1="1006" y1="736" x2="1278" y2="736" stroke="#d48ad8" stroke-width="18"/><rect x="320" y="559" width="273" height="24" rx="0" fill="#56709e" stroke="#7d95c8" stroke-width="14"/><rect x="320" y="600" width="273" height="24" rx="0" fill="#56709e" stroke="#7d95c8" stroke-width="14"/><rect x="320" y="642" width="273" height="24" rx="0" fill="#56709e" stroke="#7d95c8" stroke-width="14"/><rect x="320" y="683" width="273" height="24" rx="0" fill="#56709e" stroke="#7d95c8" stroke-width="14"/><rect x="320" y="725" width="273" height="24" rx="0" fill="#56709e" stroke="#7d95c8" stroke-width="14"/><rect x="320" y="766" width="273" height="24" rx="0" fill="#56709e" stroke="#7d95c8" stroke-width="14"/><rect x="320" y="808" width="273" height="24" rx="0" fill="#56709e" stroke="#7d95c8" stroke-width="14"/><path d="M593 571 C613 571 643 574 663 574" fill="none" stroke="#dde8ee" stroke-width="14"/><path d="M593 612 C613 612 643 599.5 663 599.5" fill="none" stroke="#dde8ee" stroke-width="14"/><path d="M593 654 C613 654 643 624.5 663 624.5" fill="none" stroke="#dde8ee" stroke-width="14"/><path d="M593 695 C613 695 643 649.5 663 649.5" fill="none" stroke="#dde8ee" stroke-width="14"/><path d="M593 737 C613 737 643 674.5 663 674.5" fill="none" stroke="#dde8ee" stroke-width="14"/><path d="M593 778 C613 778 643 700 663 700" fill="none" stroke="#dde8ee" stroke-width="14"/><path d="M593 820 C613 820 643 725 663 725" fill="none" stroke="#dde8ee" stroke-width="14"/><path d="M593 820 C613 820 643 919 663 919" fill="none" stroke="#dde8ee" stroke-width="14"/><path d="M936 409 C956 409 986 583.4 1006 583.4" fill="none" stroke="#dde8ee" stroke-width="14"/><path d="M936 816.5 C956 816.5 986 608.5 1006 608.5" fill="none" stroke="#dde8ee" stroke-width="14"/><path d="M936 919 C956 919 986 633.5 1006 633.5" fill="none" stroke="#dde8ee" stroke-width="14"/><path d="M936 961 C956 961 986 659.5 1006 659.5" fill="none" stroke="#dde8ee" stroke-width="14"/></g></svg>
<div class="t" style="left:713.5px;top:273px;font-size:12px;color:#eceef4;">End of life</div><div class="t" style="left:684.5px;top:303px;font-size:12.5px;color:#7a82a6;">Input flows</div><div class="t" style="left:679px;top:338.8px;font-size:12px;color:#3b3541;letter-spacing:0.2px;">Add flow +</div><div class="t" style="right:911.5px;top:375px;font-size:12.5px;color:#7a82a6;">Output flows</div><div class="t" style="left:694px;top:401.8px;font-size:12px;color:#eceef4;font-weight:bold;letter-spacing:-0.55px;">Disposed HS</div><div class="t" style="right:937.5px;top:401.8px;font-size:12px;color:#eceef4;letter-spacing:-0.5px;">1.00</div><div class="t" style="left:886px;top:401.8px;font-size:12px;color:#eceef4;">Item(s)</div><div class="t" style="left:694px;top:427.8px;font-size:12px;color:#eceef4;">municipal solid waste</div><div class="t" style="right:937.5px;top:427.8px;font-size:12px;color:#eceef4;letter-spacing:-0.5px;">0.75</div><div class="t" style="left:886px;top:427.8px;font-size:12px;color:#eceef4;">kg</div><div class="t" style="left:855px;top:455.8px;font-size:12px;color:#3b3541;letter-spacing:0.2px;">Add flow +</div><div class="t" style="left:713.5px;top:510px;font-size:12px;color:#eceef4;">HS Manufacturing - IN</div><div class="t" style="left:684.5px;top:540px;font-size:12.5px;color:#7a82a6;">Input flows</div><div class="t" style="left:694px;top:567.3px;font-size:12px;color:#eceef4;">brass</div><div class="t" style="left:851.5px;top:567.3px;font-size:12px;color:#eceef4;letter-spacing:-0.5px;">2.05E-2</div><div class="t" style="left:897.5px;top:567.3px;font-size:12px;color:#eceef4;">kg</div><div class="t" style="left:695.8px;top:593.3px;font-size:12px;color:#eceef4;">electricity, medium ...</div><div class="t" style="left:851.5px;top:593.3px;font-size:12px;color:#eceef4;letter-spacing:-0.5px;">2.47</div><div class="t" style="left:897.5px;top:593.3px;font-size:12px;color:#eceef4;">MJ</div><div class="t" style="left:695.8px;top:618.3px;font-size:12px;color:#eceef4;">electricity, medium ...</div><div class="t" style="left:851.5px;top:618.3px;font-size:12px;color:#eceef4;letter-spacing:-0.5px;">0.00</div><div class="t" style="left:897.5px;top:618.3px;font-size:12px;color:#eceef4;">MJ</div><div class="t" style="left:695.8px;top:643.3px;font-size:12px;color:#eceef4;">metal working, aver...</div><div class="t" style="left:851.5px;top:643.3px;font-size:12px;color:#eceef4;letter-spacing:-0.5px;">2.05E-2</div><div class="t" style="left:897.5px;top:643.3px;font-size:12px;color:#eceef4;">kg</div><div class="t" style="left:695.8px;top:668.3px;font-size:12px;color:#eceef4;">polyester resin, unsa...</div><div class="t" style="left:851.5px;top:668.3px;font-size:12px;color:#eceef4;letter-spacing:-0.5px;">2.32E-2</div><div class="t" style="left:897.5px;top:668.3px;font-size:12px;color:#eceef4;">kg</div><div class="t" style="left:694px;top:693.3px;font-size:12px;color:#eceef4;">textile, knit cotton</div><div class="t" style="left:851.5px;top:693.3px;font-size:12px;color:#eceef4;letter-spacing:-0.5px;">0.79</div><div class="t" style="left:897.5px;top:693.3px;font-size:12px;color:#eceef4;">kg</div><div class="t" style="left:695.8px;top:718.3px;font-size:12px;color:#eceef4;">transport, freight, lo...</div><div class="t" style="left:851.5px;top:718.3px;font-size:12px;color:#eceef4;letter-spacing:-0.5px;">3.95E-2</div><div class="t" style="left:897.5px;top:718.3px;font-size:12px;color:#eceef4;">t*km</div><div class="t" style="left:679px;top:745.8px;font-size:12px;color:#3b3541;letter-spacing:0.2px;">Add flow +</div><div class="t" style="right:911.5px;top:782.7px;font-size:12.5px;color:#7a82a6;">Output flows</div><div class="t" style="left:694px;top:809.7px;font-size:12px;color:#eceef4;font-weight:bold;letter-spacing:-0.05px;">Manufactured HS</div><div class="t" style="right:937.5px;top:809.7px;font-size:12px;color:#eceef4;letter-spacing:-0.5px;">1.00</div><div class="t" style="left:886px;top:809.7px;font-size:12px;color:#eceef4;">Item(s)</div><div class="t" style="left:694px;top:835.2px;font-size:12px;color:#eceef4;">waste yarn and wa...</div><div class="t" style="right:939.5px;top:835.2px;font-size:12px;color:#eceef4;letter-spacing:-0.5px;">8.33E-2</div><div class="t" style="left:886px;top:835.2px;font-size:12px;color:#eceef4;">kg</div><div class="t" style="left:855px;top:862.8px;font-size:12px;color:#3b3541;letter-spacing:0.2px;">Add flow +</div><div class="t" style="left:710.5px;top:912.5px;font-size:12px;color:#eceef4;">HS Distribution</div><div class="t" style="left:710.5px;top:954.5px;font-size:12px;color:#eceef4;">HS Use - DE</div><div class="t" style="left:1058.5px;top:518.3px;font-size:12px;color:#eceef4;">HS life cycle</div><div class="t" style="left:1028.5px;top:550.3px;font-size:12.5px;color:#7a82a6;">Input flows</div><div class="t" style="left:1037.5px;top:576.6999999999999px;font-size:12px;color:#eceef4;">Disposed HS</div><div class="t" style="right:595px;top:576.6999999999999px;font-size:12px;color:#eceef4;letter-spacing:-0.5px;">1.00</div><div class="t" style="left:1227.5px;top:576.6999999999999px;font-size:12px;color:#eceef4;">Item(s)</div><div class="t" style="left:1037.5px;top:601.8px;font-size:12px;color:#eceef4;">Manufactured HS</div><div class="t" style="right:595px;top:601.8px;font-size:12px;color:#eceef4;letter-spacing:-0.5px;">1.00</div><div class="t" style="left:1227.5px;top:601.8px;font-size:12px;color:#eceef4;">Item(s)</div><div class="t" style="left:1037.5px;top:626.9px;font-size:12px;color:#eceef4;">Transported HS</div><div class="t" style="right:595px;top:626.9px;font-size:12px;color:#eceef4;letter-spacing:-0.5px;">1.00</div><div class="t" style="left:1227.5px;top:626.9px;font-size:12px;color:#eceef4;">Item(s)</div><div class="t" style="left:1037.5px;top:652.8px;font-size:12px;color:#eceef4;">Washed clothes</div><div class="t" style="right:595px;top:652.8px;font-size:12px;color:#eceef4;letter-spacing:-0.5px;">6.16E1</div><div class="t" style="left:1227.5px;top:652.8px;font-size:12px;color:#eceef4;">kg</div><div class="t" style="left:1037.5px;top:677.9px;font-size:12px;color:#eceef4;">(+-)-Citronellol</div><div class="t" style="right:595px;top:677.9px;font-size:12px;color:#eceef4;letter-spacing:-0.5px;">1.00</div><div class="t" style="left:1227.5px;top:677.9px;font-size:12px;color:#eceef4;">kg</div><div class="t" style="left:1023px;top:705.8px;font-size:12px;color:#3b3541;letter-spacing:0.2px;">Add flow +</div><div class="t" style="right:569px;top:742.6px;font-size:12.5px;color:#7a82a6;">Output flows</div><div class="t" style="left:1037.5px;top:768.8px;font-size:12px;color:#eceef4;font-weight:bold;letter-spacing:-0.1px;">Worn out Hooded Swea...</div><div class="t" style="right:595px;top:768.8px;font-size:12px;color:#eceef4;letter-spacing:-0.5px;">1.00</div><div class="t" style="left:1227.5px;top:768.8px;font-size:12px;color:#eceef4;">Item(s)</div><div class="t" style="left:1197px;top:797.8px;font-size:12px;color:#3b3541;letter-spacing:0.2px;">Add flow +</div><div class="t" style="left:369.5px;top:563.9px;font-size:12px;color:#eceef4;">market for brass | brass | Cutoff, ...</div><div class="t" style="left:369.5px;top:604.9px;font-size:12px;color:#eceef4;">market for electricity, medium v...</div><div class="t" style="left:369.5px;top:646.9px;font-size:12px;color:#eceef4;">market for electricity, medium v...</div><div class="t" style="left:370.5px;top:687.9px;font-size:12px;color:#eceef4;">market for metal working, avera...</div><div class="t" style="left:369.5px;top:729.9px;font-size:12px;color:#eceef4;">market for polyester resin, unsat...</div><div class="t" style="left:368.5px;top:770.9px;font-size:12px;color:#eceef4;">textile production, organic cotto...</div><div class="t" style="left:368.5px;top:812.9px;font-size:12px;color:#eceef4;">market for transport, freight, lorr...</div>
</body></html>
